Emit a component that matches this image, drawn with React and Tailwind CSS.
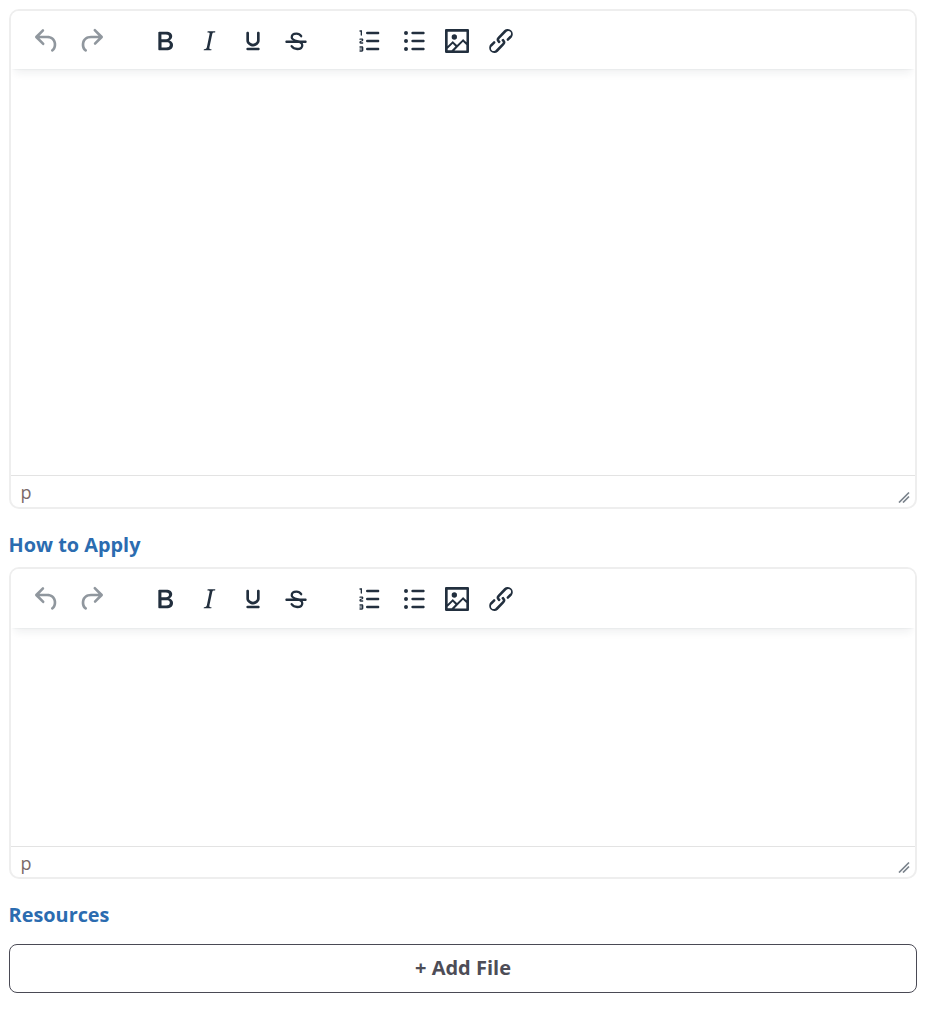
import React from 'react';

const icons = {
  undo: 'M6.4 8H12c3.7 0 6.2 2 6.8 5.1.6 2.7-.4 5.6-2.3 6.8a1 1 0 01-1-1.8c1.1-.6 1.8-2.7 1.4-4.6-.5-2.1-2.1-3.5-4.9-3.5H6.4l3.3 3.3a1 1 0 11-1.4 1.4l-5-5a1 1 0 010-1.4l5-5a1 1 0 011.4 1.4L6.4 8z',
  redo: 'M17.6 10H12c-2.8 0-4.4 1.4-4.9 3.5-.4 2 .3 4 1.4 4.6a1 1 0 11-1 1.8c-2-1.2-2.9-4.1-2.3-6.8.6-3 3-5.1 6.8-5.1h5.6l-3.3-3.3a1 1 0 111.4-1.4l5 5a1 1 0 010 1.4l-5 5a1 1 0 01-1.4-1.4l3.3-3.3z',
  bold: 'M7.8 19c-.3 0-.5 0-.6-.2l-.2-.5V5.7c0-.2 0-.4.2-.5l.6-.2h5c1.5 0 2.7.3 3.5 1 .7.6 1.1 1.4 1.1 2.5a3 3 0 01-.6 1.9c-.4.6-1 1-1.6 1.2.4.1.9.3 1.3.6s.8.7 1 1.2c.4.4.5 1 .5 1.6 0 1.3-.4 2.3-1.3 3-.8.7-2.1 1-3.8 1H7.8zm5-8.3c.6 0 1.2-.1 1.6-.5.4-.3.6-.7.6-1.3 0-1.1-.8-1.7-2.3-1.7H9.3v3.5h3.4zm.5 6c.7 0 1.3-.1 1.7-.4.4-.4.6-.9.6-1.5s-.2-1-.7-1.4c-.4-.3-1-.4-2-.4H9.4v3.8h4z',
  italic: 'M16.7 4.7l-.1.9h-.3c-.6 0-1 0-1.4.3-.3.3-.4.6-.5 1.1l-2.1 9.8v.6c0 .5.4.8 1.4.8h.2l-.2.8H8l.2-.8h.2c1.1 0 1.8-.5 2-1.5l2-9.8.1-.5c0-.6-.4-.8-1.4-.8h-.3l.2-.9h5.8z',
  underline: 'M16 5c.6 0 1 .4 1 1v5.5a4 4 0 01-.4 1.8l-1 1.4a5.3 5.3 0 01-5.5 1 5 5 0 01-1.6-1c-.5-.4-.8-.9-1.1-1.4a4 4 0 01-.4-1.8V6c0-.6.4-1 1-1s1 .4 1 1v5.5c0 .3 0 .6.2 1l.6.7a3.3 3.3 0 002.2.8 3.4 3.4 0 002.2-.8c.3-.2.4-.5.6-.8l.2-.9V6c0-.6.4-1 1-1zM8 17h8c.6 0 1 .4 1 1s-.4 1-1 1H8a1 1 0 010-2z',
  strike: 'M5 11.6h14c.6 0 1 .4 1 .9s-.4 1-1 1H5c-.6 0-1-.5-1-1s.4-.9 1-.9z',
  numlist: 'M10 17h8c.6 0 1 .4 1 1s-.4 1-1 1h-8a1 1 0 010-2zm0-6h8c.6 0 1 .4 1 1s-.4 1-1 1h-8a1 1 0 010-2zm0-6h8c.6 0 1 .4 1 1s-.4 1-1 1h-8a1 1 0 110-2zM6 4v3.5c0 .3-.2.5-.5.5a.5.5 0 01-.5-.5V5h-.5a.5.5 0 010-1H6zm-1 8.8l.2.2h1.3c.3 0 .5.2.5.5s-.2.5-.5.5H4.9a1 1 0 01-.9-1V13c0-.4.3-.8.6-1l1.2-.4.2-.3a.2.2 0 00-.2-.2H4.5a.5.5 0 01-.5-.5c0-.3.2-.5.5-.5h1.6c.5 0 .9.4.9 1v.1c0 .4-.3.8-.6 1l-1.2.4-.2.3zM7 17v2c0 .6-.4 1-1 1H4.5a.5.5 0 010-1h1.2c.2 0 .3-.1.3-.3 0-.2-.1-.3-.3-.3H4.4a.4.4 0 110-.8h1.3c.2 0 .3-.1.3-.3 0-.2-.1-.3-.3-.3H4.5a.5.5 0 110-1H6c.6 0 1 .4 1 1z',
  bullist: 'M11 5h8c.6 0 1 .4 1 1s-.4 1-1 1h-8a1 1 0 010-2zm0 6h8c.6 0 1 .4 1 1s-.4 1-1 1h-8a1 1 0 010-2zm0 6h8c.6 0 1 .4 1 1s-.4 1-1 1h-8a1 1 0 010-2zM4.5 6a1.5 1.5 0 113 0 1.5 1.5 0 01-3 0zm0 6a1.5 1.5 0 113 0 1.5 1.5 0 01-3 0zm0 6a1.5 1.5 0 113 0 1.5 1.5 0 01-3 0z',
  image: 'M5 15.7l3.3-3.2c.3-.3.7-.3 1 0L12 15l4.1-4c.3-.4.8-.4 1 0l2 1.9V5H5v10.7zM5 18V19h3l2.8-2.9-2-2L5 17.9zm14-3l-2.5-2.4-6.4 6.5H19v-4zM4 3h16c.6 0 1 .4 1 1v16c0 .6-.4 1-1 1H4a1 1 0 01-1-1V4c0-.6.4-1 1-1zm6 8a2 2 0 110-4 2 2 0 010 4z',
  link: 'M6.2 12.3a1 1 0 011.4 1.4l-2 2a2 2 0 102.6 2.8l4.8-4.8a1 1 0 000-1.4 1 1 0 111.4-1.3 2.9 2.9 0 010 4L9.6 20a3.9 3.9 0 01-5.5-5.5l2-2zm11.6-.6a1 1 0 01-1.4-1.4l2-2a2 2 0 10-2.6-2.8L11 10.3a1 1 0 000 1.4A1 1 0 119.6 13a2.9 2.9 0 010-4L14.4 4a3.9 3.9 0 015.5 5.5l-2 2z',
};

const groups = [
  [{ name: 'undo', muted: true }, { name: 'redo', muted: true }],
  [{ name: 'bold' }, { name: 'italic' }, { name: 'underline' }, { name: 'strike' }],
  [{ name: 'numlist' }, { name: 'bullist' }, { name: 'image' }, { name: 'link' }],
];

const ToolButton = ({ name, muted }) => (
  <button type="button" className="flex h-11 w-[43.7px] items-center justify-center">
    <svg
      viewBox="0 0 24 24"
      className={`h-8 w-8 shrink-0 fill-current ${muted ? 'text-[#222f3e]/50' : 'text-[#222f3e]'}`}
    >
      <path d={icons[name]} fillRule={name === 'image' ? 'evenodd' : 'nonzero'} />
      {name === 'strike' && (
        <path
          d="M15.9 8.4c-.8-1.3-2-2-3.6-2-2 0-3.5 1-3.5 2.7 0 3.6 7.9 2.2 7.9 6 0 1.9-1.6 2.9-3.8 2.9-1.8 0-3.2-.7-4.2-2.1"
          fill="none"
          stroke="currentColor"
          strokeWidth="1.7"
          strokeLinecap="round"
        />
      )}
    </svg>
  </button>
);

const Editor = ({ heightClass, toolbarClass, statusClass }) => (
  <div className={`flex w-full flex-col overflow-hidden rounded-[10px] border-2 border-[#eeeeee] bg-white ${heightClass}`}>
    {/* Toolbar */}
    <div className={`relative z-10 flex shrink-0 items-center gap-[30px] bg-white pl-[14px] shadow-[0_2px_2px_-2px_rgba(34,47,62,0.1),0_8px_8px_-4px_rgba(34,47,62,0.07)] ${toolbarClass}`}>
      {groups.map((group, i) => (
        <div key={i} className="flex first:mr-[1px]">
          {group.map((item) => (
            <ToolButton key={item.name} {...item} />
          ))}
        </div>
      ))}
    </div>

    {/* Edit area */}
    <div className="flex-1 bg-white"></div>

    {/* Status bar */}
    <div className={`flex shrink-0 items-center justify-between border-t border-[#e3e3e3] pl-[9.5px] pr-[5px] text-[18px] text-[#7a6a6a] ${statusClass}`}>
      <span className="pt-[2px]">p</span>
      <svg viewBox="0 0 12 12" className="mt-[10px] h-3 w-3 stroke-[#222f3e]/60" strokeWidth="1.7">
        <path d="M1 11.5L11 1.5M5 11.5l6-6" fill="none" />
      </svg>
    </div>
  </div>
);

const Label = ({ children, className = '' }) => (
  <div className={`-ml-[0.4px] h-7 text-[19.85px] leading-7 font-bold text-[#2b6cb0] ${className}`}>{children}</div>
);

export default function App() {
  return (
    <div className="min-h-[1012px] w-[927px] bg-white pl-[9px] pr-[10px] pt-[9px] font-['Open_Sans',sans-serif]">
      <Editor heightClass="h-[500px]" toolbarClass="h-[58px] pt-[2px]" statusClass="h-[32px]" />
      <Label className="mb-2 mt-[22px]">How to Apply</Label>
      <Editor heightClass="h-[312px]" toolbarClass="h-[59px] pt-[1px]" statusClass="h-[31px]" />
      <Label className="mb-[15px] mt-[22px]">Resources</Label>
      <button
        type="button"
        className="h-[49px] w-full rounded-lg border border-[#4a4a55] bg-white pb-[2px] text-[20px] font-bold text-[#4d4d57]"
      >
        + Add File
      </button>
    </div>
  );
}
